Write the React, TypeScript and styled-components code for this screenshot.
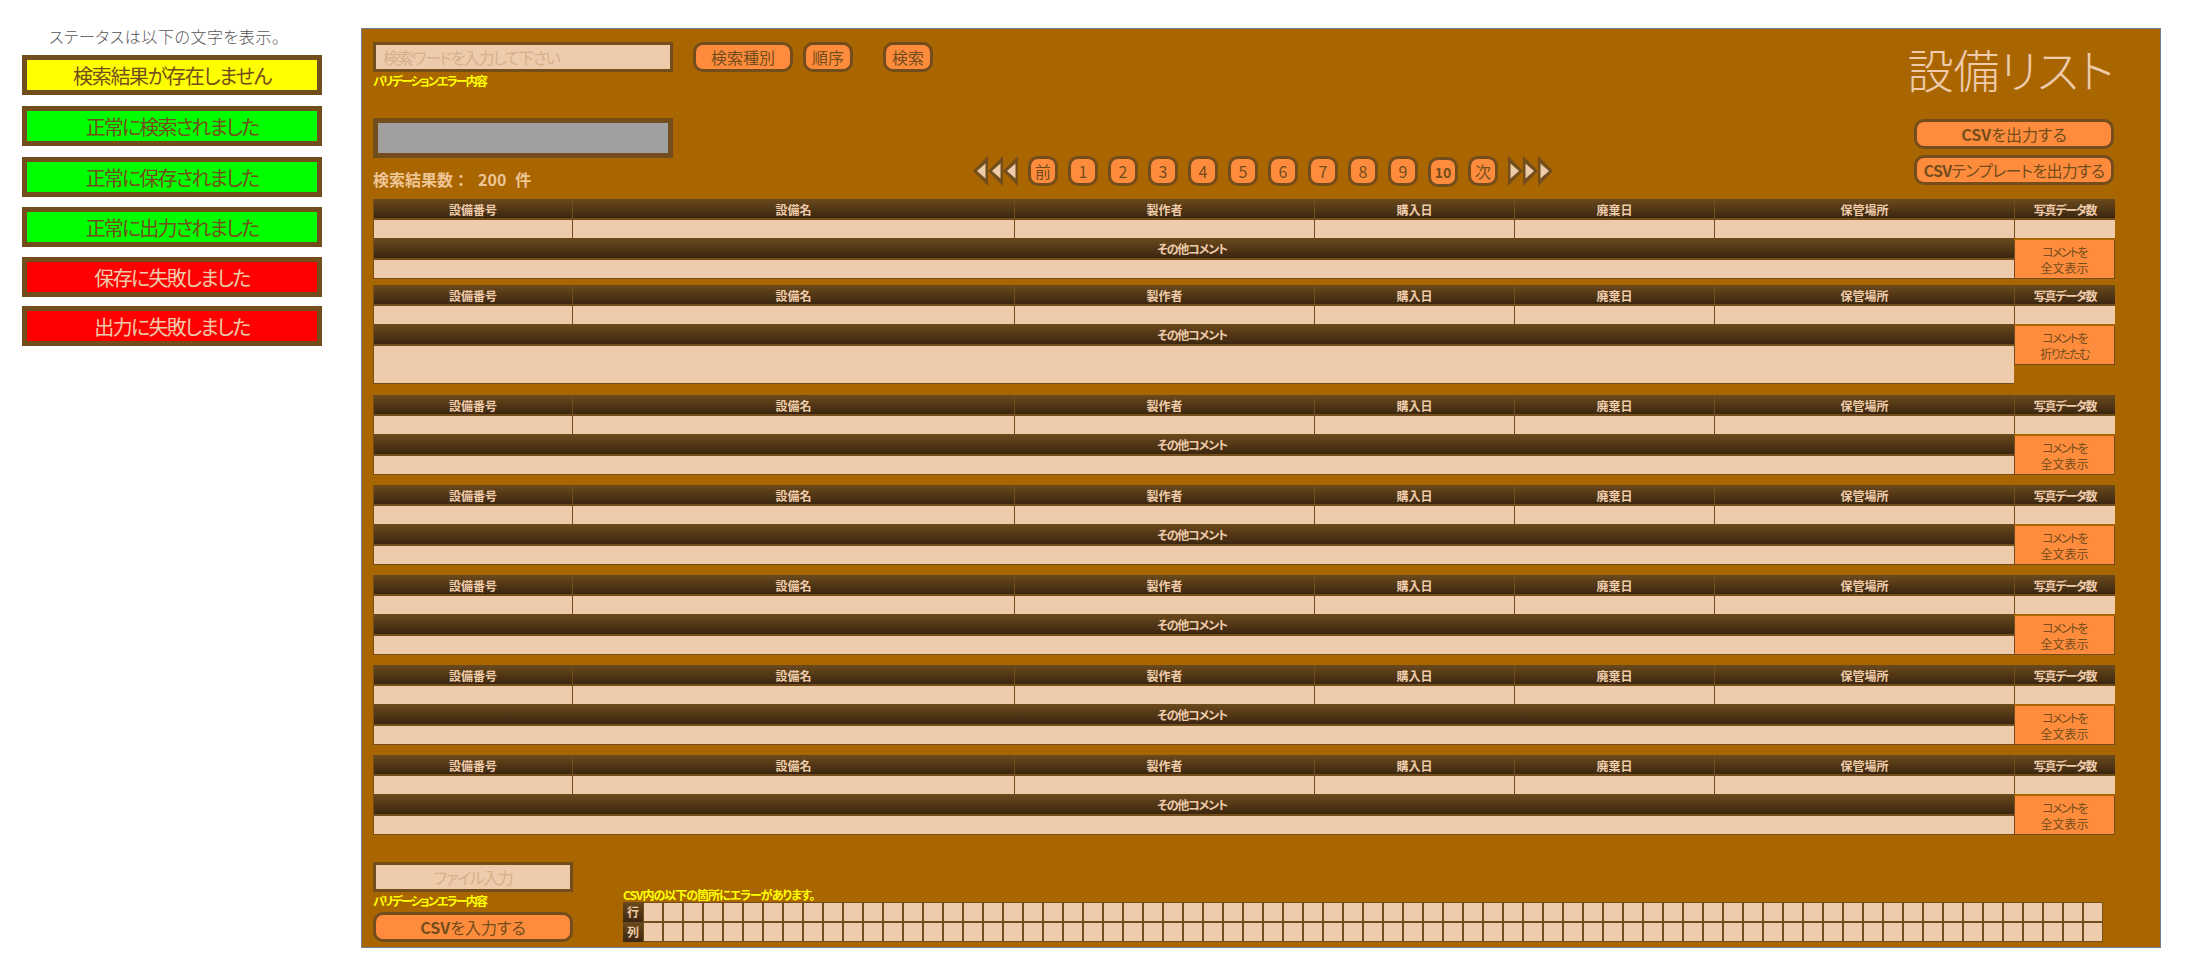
import React from 'react';
import styled, { createGlobalStyle } from 'styled-components';

const BROWN = '#734d1b';
const PANEL = '#a96500';
const SAND = '#eecbab';
const ORANGE = '#ff8c3c';
const HEAD = 'linear-gradient(#6b4a1c, #3b2610)';

const GlobalStyle = createGlobalStyle`
  html, body {
    margin: 0;
    background: #fff;
  }
  body {
    font-family: "Noto Sans CJK JP", "Liberation Sans", sans-serif;
    font-feature-settings: "palt";
  }
`;

const Page = styled.div`
  display: flex;
  align-items: flex-start;
  padding: 28px 0 0 22px;
  gap: 39px;
`;

const Sidebar = styled.aside`
  width: 300px;
  flex: 0 0 auto;
`;

const Caption = styled.div`
  height: 27px;
  padding-left: 27px;
  font-size: 16px;
  line-height: 16px;
  letter-spacing: 0.55px;
  font-weight: 300;
  color: #555;
`;

const StatusBox = styled.div<{ $bg: string; $fg: string; $top: number; $track: number }>`
  box-sizing: border-box;
  height: 40px;
  margin-top: ${p => p.$top}px;
  border: 5px solid ${BROWN};
  background: ${p => p.$bg};
  color: ${p => p.$fg};
  font-size: 20px;
  line-height: 32px;
  letter-spacing: ${p => p.$track}px;
  text-align: center;
`;

const Panel = styled.main`
  box-sizing: border-box;
  width: 1800px;
  height: 920px;
  padding: 13px 46px 0 11px;
  background: ${PANEL};
  border: 1px solid #708090;
`;

const Header = styled.header`
  display: grid;
  grid-template-columns: 300px 1fr 200px;
  height: 157px;
`;

const HeaderLeft = styled.div`
  display: flex;
  flex-direction: column;
`;

const SearchInput = styled.input`
  box-sizing: border-box;
  width: 300px;
  height: 30px;
  padding: 0 7px;
  border: 3px solid ${BROWN};
  border-radius: 0;
  background: ${SAND};
  font-family: inherit;
  font-feature-settings: inherit;
  font-size: 16px;
  letter-spacing: -1.4px;
  outline: none;
  &::placeholder {
    color: #d6b08c;
    opacity: 1;
  }
`;

const ValidationText = styled.div`
  margin-top: 2px;
  height: 15px;
  font-size: 12px;
  line-height: 14px;
  letter-spacing: -1.8px;
  font-weight: 700;
  color: #ffff00;
`;

const ProgressBox = styled.div`
  box-sizing: border-box;
  height: 40px;
  margin-top: 29px;
  border: 5px solid ${BROWN};
  background: #a0a0a0;
`;

const ResultCount = styled.div`
  margin-top: 9px;
  display: flex;
  gap: 9px;
  font-size: 16px;
  font-feature-settings: normal;
  line-height: 24px;
  font-weight: 700;
  color: #eec596;
`;

const HeaderMiddle = styled.div`
  display: flex;
  flex-direction: column;
  justify-content: space-between;
  padding: 0 0 12px 20px;
`;

const SearchButtons = styled.div`
  display: flex;
`;

const PillButton = styled.button<{ $w: number; $left?: number }>`
  box-sizing: border-box;
  width: ${p => p.$w}px;
  height: 30px;
  margin: 0 0 0 ${p => p.$left ?? 0}px;
  padding: 0;
  border: 3px solid ${BROWN};
  border-radius: 10px;
  background: ${ORANGE};
  color: ${BROWN};
  font-family: inherit;
  font-feature-settings: inherit;
  font-size: 16px;
  line-height: 22px;
`;

const Pagination = styled.nav`
  display: flex;
  align-items: flex-start;
  margin-left: 280px;
`;

const Arrows = styled.svg<{ $flip?: boolean }>`
  display: block;
  flex: 0 0 auto;
  ${p => p.$flip && 'transform: scaleX(-1);'}
  ${p => p.$flip && 'margin-left: 10px;'}
`;

const PageButton = styled.button<{ $low?: boolean }>`
  box-sizing: border-box;
  width: 30px;
  height: 30px;
  margin: ${p => (p.$low ? 1 : 0)}px 0 0 10px;
  padding: 0;
  border: 3px solid ${BROWN};
  border-radius: 10px;
  background: ${ORANGE};
  color: ${BROWN};
  font-family: inherit;
  font-size: ${p => (p.$low ? 14 : 16)}px;
  font-weight: ${p => (p.$low ? 700 : 400)};
  line-height: 22px;
`;

const HeaderRight = styled.div`
  display: flex;
  flex-direction: column;
  align-items: flex-end;
`;

const Title = styled.h1`
  height: 77px;
  margin: 0;
  font-size: 46px;
  line-height: 53px;
  font-weight: 300;
  color: ${SAND};
  white-space: nowrap;
`;

const WideButton = styled.button<{ $top?: number; $tight?: boolean }>`
  box-sizing: border-box;
  width: 200px;
  height: 30px;
  margin: ${p => p.$top ?? 0}px 0 0;
  padding: 0;
  border: 3px solid ${BROWN};
  border-radius: 10px;
  background: ${ORANGE};
  color: ${BROWN};
  font-family: inherit;
  font-feature-settings: inherit;
  font-size: 16px;
  line-height: 22px;
  letter-spacing: ${p => (p.$tight ? -0.7 : 0)}px;
  white-space: nowrap;
  b {
    font-weight: 700;
  }
`;

const Row = styled.section<{ $top: number }>`
  display: grid;
  grid-template-columns: 199px 442px 300px 200px 200px 300px 101px;
  grid-template-rows: 21px 18px 22px auto;
  margin-top: ${p => p.$top}px;
`;

const HeadCell = styled.div<{ $wide?: boolean; $tight?: boolean }>`
  ${p => p.$wide && 'grid-column: 1 / 7; padding-right: 4px;'}
  box-sizing: border-box;
  border-bottom: 2px solid ${BROWN};
  border-left: 1px solid ${BROWN};
  background: ${HEAD};
  color: ${SAND};
  font-size: 12px;
  line-height: 21px;
  font-weight: 700;
  letter-spacing: ${p => (p.$tight ? -1.2 : 0)}px;
  text-align: center;
`;

const ValueCell = styled.div`
  border-left: 1px solid ${BROWN};
  background: ${SAND};
`;

const CommentCell = styled.div<{ $open?: boolean }>`
  grid-column: 1 / 7;
  box-sizing: border-box;
  height: ${p => (p.$open ? 38 : 19)}px;
  border: 1px solid ${BROWN};
  border-width: 0 0 1px 1px;
  background: ${SAND};
`;

const ToggleButton = styled.button`
  grid-column: 7;
  grid-row: 3 / 5;
  align-self: start;
  box-sizing: border-box;
  height: 39px;
  margin: 2px 0 0;
  padding: 1px 0 0;
  border: 1px solid ${BROWN};
  border-top: 0;
  border-radius: 0;
  background: ${ORANGE};
  color: ${BROWN};
  font-family: inherit;
  font-feature-settings: inherit;
  font-size: 12px;
  line-height: 16px;
`;

const TightLine = styled.span`
  letter-spacing: -1.6px;
`;

const Footer = styled.footer`
  display: flex;
  gap: 50px;
  margin-top: 27px;
`;

const FileColumn = styled.div`
  width: 200px;
  display: flex;
  flex-direction: column;
`;

const FileField = styled.div`
  box-sizing: border-box;
  height: 30px;
  border: 3px solid ${BROWN};
  background: ${SAND};
  color: #d6b08c;
  font-size: 16px;
  line-height: 24px;
  letter-spacing: -1.5px;
  text-align: center;
`;

const CsvColumn = styled.div`
  display: flex;
  flex-direction: column;
  justify-content: flex-end;
`;

const CsvError = styled.div`
  height: 13px;
  margin-bottom: 1px;
  font-size: 12px;
  line-height: 13px;
  letter-spacing: -1px;
  font-weight: 700;
  color: #ffff00;
`;

const CsvLine = styled.div`
  display: flex;
  height: 20px;
`;

const CsvLabel = styled.div`
  width: 20px;
  background: ${HEAD};
  color: ${SAND};
  font-size: 12px;
  line-height: 20px;
  font-weight: 700;
  text-align: center;
`;

const CsvCell = styled.div`
  box-sizing: border-box;
  width: 20px;
  border: 1px solid ${BROWN};
  background: ${SAND};
`;

const Triangles: React.FC<{ flip?: boolean }> = ({ flip }) => (
  <Arrows $flip={flip} width="45" height="30" viewBox="0 0 45 30">
    {[0, 15, 30].map(x => (
      <g key={x} transform={`translate(${x} 0)`}>
        <polygon points="0,15 15,0 15,30" fill={BROWN} />
        <polygon points="4,15 12.5,7.5 12.5,22.5" fill={SAND} />
      </g>
    ))}
  </Arrows>
);

const statuses = [
  { text: '検索結果が存在しません', bg: '#ffff00', fg: BROWN, top: 0, track: -1.3 },
  { text: '正常に検索されました', bg: '#00ff00', fg: BROWN, top: 11, track: -1.9 },
  { text: '正常に保存されました', bg: '#00ff00', fg: BROWN, top: 11, track: -1.9 },
  { text: '正常に出力されました', bg: '#00ff00', fg: BROWN, top: 10, track: -1.9 },
  { text: '保存に失敗しました', bg: '#ff0000', fg: SAND, top: 10, track: -1.7 },
  { text: '出力に失敗しました', bg: '#ff0000', fg: SAND, top: 9, track: -1.7 },
];

const columns = ['設備番号', '設備名', '製作者', '購入日', '廃棄日', '保管場所', '写真データ数'];
const rowTops = [0, 6, 11, 10, 10, 10, 10];
const pages = ['前', '1', '2', '3', '4', '5', '6', '7', '8', '9', '10', '次'];
const csvCells = Array.from({ length: 73 }, (_, i) => i);

export default function App() {
  return (
    <Page>
      <GlobalStyle />
      <Sidebar>
        <Caption>ステータスは以下の文字を表示。</Caption>
        {statuses.map(s => (
          <StatusBox key={s.text} $bg={s.bg} $fg={s.fg} $top={s.top} $track={s.track}>
            {s.text}
          </StatusBox>
        ))}
      </Sidebar>
      <Panel>
        <Header>
          <HeaderLeft>
            <SearchInput placeholder="検索ワードを入力して下さい" />
            <ValidationText>バリデーションエラー内容</ValidationText>
            <ProgressBox />
            <ResultCount>
              <span>検索結果数：</span>
              <span>200</span>
              <span>件</span>
            </ResultCount>
          </HeaderLeft>
          <HeaderMiddle>
            <SearchButtons>
              <PillButton $w={100}>検索種別</PillButton>
              <PillButton $w={50} $left={10}>順序</PillButton>
              <PillButton $w={50} $left={30}>検索</PillButton>
            </SearchButtons>
            <Pagination>
              <Triangles />
              {pages.map(p => (
                <PageButton key={p} $low={p === '10'}>{p}</PageButton>
              ))}
              <Triangles flip />
            </Pagination>
          </HeaderMiddle>
          <HeaderRight>
            <Title>設備リスト</Title>
            <WideButton><b>CSV</b>を出力する</WideButton>
            <WideButton $top={6} $tight><b>CSV</b>テンプレートを出力する</WideButton>
          </HeaderRight>
        </Header>
        {rowTops.map((top, i) => (
          <Row key={i} $top={top}>
            {columns.map(c => <HeadCell key={c} $tight={c === '写真データ数'}>{c}</HeadCell>)}
            {columns.map(c => <ValueCell key={c} />)}
            <HeadCell $wide $tight>その他コメント</HeadCell>
            <CommentCell $open={i === 1} />
            <ToggleButton>
              <TightLine>コメントを</TightLine>
              <br />
              {i === 1 ? <TightLine>折りたたむ</TightLine> : '全文表示'}
            </ToggleButton>
          </Row>
        ))}
        <Footer>
          <FileColumn>
            <FileField>ファイル入力</FileField>
            <ValidationText>バリデーションエラー内容</ValidationText>
            <WideButton $top={3}><b>CSV</b>を入力する</WideButton>
          </FileColumn>
          <CsvColumn>
            <CsvError>CSV内の以下の箇所にエラーがあります。</CsvError>
            {['行', '列'].map(label => (
              <CsvLine key={label}>
                <CsvLabel>{label}</CsvLabel>
                {csvCells.map(n => <CsvCell key={n} />)}
              </CsvLine>
            ))}
          </CsvColumn>
        </Footer>
      </Panel>
    </Page>
  );
}
